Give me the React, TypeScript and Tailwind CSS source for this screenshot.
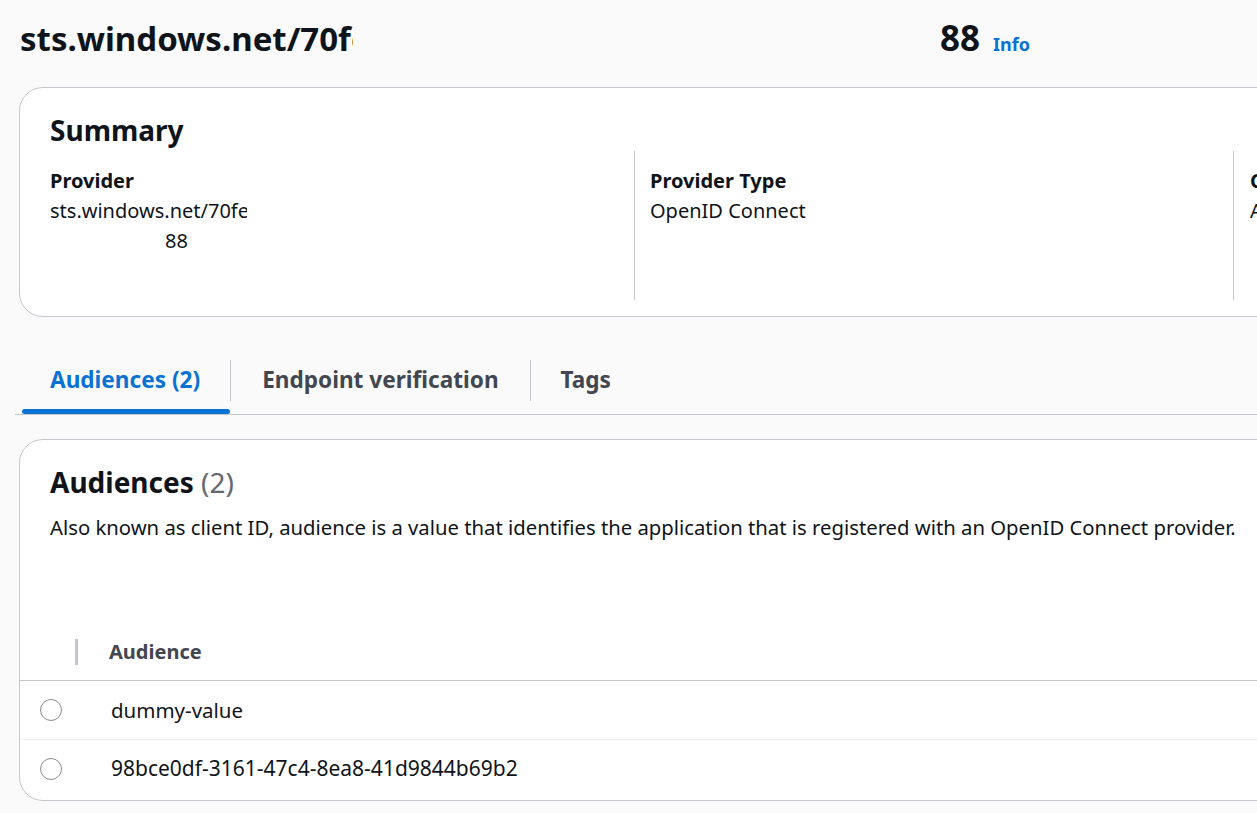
import React from "react";

const font = { fontFamily: '"Noto Sans", "Open Sans", Arial, sans-serif' };

function Radio() {
  return <span className="block w-[22px] h-[22px] rounded-full border-[1.5px] border-[#8c8c94] bg-white" />;
}

export default function App() {
  return (
    <div className="w-full h-[813px] bg-[#fafafa] overflow-hidden text-[#0f141a]" style={font}>
      <div className="w-[1800px] pl-[19px]">
        {/* Title */}
        <div className="flex items-baseline h-[76px] pt-[11px]">
          <h1 className="flex items-baseline text-[33px] leading-[54px] font-bold">
            <span className="block w-[334px] overflow-hidden whitespace-nowrap pl-[1px]">sts.windows.net/70fe</span>
            <span className="ml-[587px] text-[35px]">88</span>
          </h1>
          <span className="ml-[13px] text-[18px] font-bold text-[#0972d3]">Info</span>
        </div>

        {/* Summary card */}
        <div className="mt-[11px] bg-white border border-[#c6c6cd] rounded-[24px] pl-[30px] pt-[24px] pb-[16px]">
          <h2 className="text-[28px] leading-[36px] font-bold">Summary</h2>
          <div className="mt-[3px] flex h-[149px]">
            <div className="w-[584px] pt-[15px] text-[20px] leading-[30px]">
              <div className="font-bold">Provider</div>
              <div className="w-[197px] overflow-hidden whitespace-nowrap">sts.windows.net/70fe</div>
              <div className="pl-[115px]">88</div>
            </div>
            <div className="w-[599px] border-l border-[#c6c6cd] pl-[15px] pt-[15px] text-[20px] leading-[30px]">
              <div className="font-bold">Provider Type</div>
              <div>OpenID Connect</div>
            </div>
            <div className="w-[500px] border-l border-[#c6c6cd] pl-[16px] pt-[15px] text-[20px] leading-[30px]">
              <div className="font-bold">Creation time</div>
              <div>April 24, 2024</div>
            </div>
          </div>
        </div>

        {/* Tabs */}
        <div className="mt-[43px] flex border-b border-[#c6c6cd] ml-[-4px] pl-[7px]">
          <div className="flex flex-col">
            <div className="h-[41px] flex items-center pb-[1px] pl-[28px] pr-[30px] text-[22.6px] font-bold text-[#0972d3]">Audiences (2)</div>
            <div className="mt-[8px] h-[5px] rounded-full bg-[#0972d3]" />
          </div>
          <div className="flex flex-col">
            <div className="h-[41px] flex items-center pb-[1px] border-l border-[#c6c6cd] pl-[31px] pr-[31px] text-[22.6px] font-bold text-[#424650]">Endpoint verification</div>
            <div className="mt-[8px] h-[5px]" />
          </div>
          <div className="flex flex-col">
            <div className="h-[41px] flex items-center pb-[1px] border-l border-[#c6c6cd] pl-[30px] pr-[30px] text-[22.6px] font-bold text-[#424650]">Tags</div>
            <div className="mt-[8px] h-[5px]" />
          </div>
        </div>

        {/* Audiences card */}
        <div className="mt-[24px] bg-white border border-[#c6c6cd] rounded-[24px] overflow-hidden">
          <div className="pl-[30px] pt-[24px]">
            <h2 className="text-[28px] leading-[36px] font-bold">
              Audiences <span className="font-normal text-[#656871]">(2)</span>
            </h2>
            <p className="mt-[12px] text-[20.3px] leading-[30px] text-[#0f141a]">
              Also known as client ID, audience is a value that identifies the application that is registered with an OpenID Connect provider.
            </p>
          </div>
          <div className="mt-[82px]">
            <div className="h-[57px] flex items-center border-b border-[#c6c6cd]">
              <div className="w-[58px] flex justify-end">
                <span className="block w-[3px] h-[26px] bg-[#c6c6cd]" />
              </div>
              <div className="pl-[31px] text-[20px] font-bold text-[#424650]">Audience</div>
            </div>
            <div className="h-[59px] flex items-center border-b border-[#ebebf0]">
              <div className="w-[91px] pl-[20px]"><Radio /></div>
              <div className="text-[20.5px]">dummy-value</div>
            </div>
            <div className="h-[60px] flex items-center pb-[3px]">
              <div className="w-[91px] pl-[20px]"><Radio /></div>
              <div className="text-[21px]">98bce0df-3161-47c4-8ea8-41d9844b69b2</div>
            </div>
          </div>
        </div>
      </div>
    </div>
  );
}
